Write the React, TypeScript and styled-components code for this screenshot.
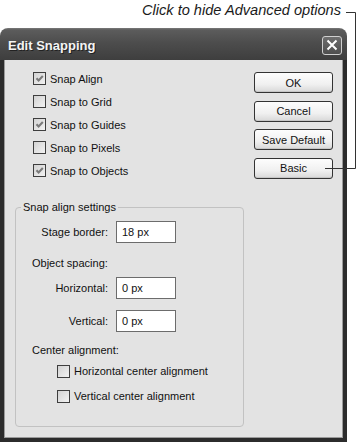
import React from 'react'
import styled, { createGlobalStyle } from 'styled-components'

const GlobalSt = createGlobalStyle`
  html, body {
    margin: 0;
    padding: 0;
    background: #fff;
  }
  body {
    font-family: "Liberation Sans", Arial, sans-serif;
    color: #111;
  }
`

const PageSt = styled.div`
  position: relative;
  width: 359px;
  height: 443px;
  overflow: hidden;
  background: #fff;
`

const CaptionSt = styled.div`
  height: 28px;
  box-sizing: border-box;
  padding: 2px 18px 0 0;
  text-align: right;
  font-style: italic;
  font-size: 14.6px;
  line-height: 16px;
  color: #1a1a1a;
`

// leader line from the caption to the Basic button
const LeaderSt = styled.svg`
  position: absolute;
  left: 0;
  top: 0;
  pointer-events: none;
`

const WindowSt = styled.div`
  width: 347px;
  height: 414px;
  display: flex;
  flex-direction: column;
`

const TitleBarSt = styled.div`
  height: 32px;
  box-sizing: border-box;
  border-radius: 8px 8px 0 0;
  background: linear-gradient(#7a7a7a 0, #5c5c5c 2px, #4d4d4d 45%, #3e3e3e 100%);
  display: flex;
  align-items: center;
  justify-content: space-between;
  padding: 2px 5px 0 8px;
`

const TitleSt = styled.div`
  font-size: 13px;
  font-weight: bold;
  color: #f4f4f4;
  text-shadow: 1px 1px 0 #222;
`

const CloseSt = styled.div`
  width: 20px;
  height: 19px;
  box-sizing: border-box;
  border: 1px solid #d0d0d0;
  border-radius: 3px;
  background: linear-gradient(#6e6e6e, #4e4e4e);
  display: flex;
  align-items: center;
  justify-content: center;
`

const BodySt = styled.div`
  flex: 1;
  display: flex;
  background: #e3e3e3;
  border: 4px solid #2c2c2c;
  border-top: 0;
  box-shadow: inset 1px 0 #9a9a9a, inset -1px 0 #9a9a9a, inset 0 -1px #9a9a9a;
`

const LeftColSt = styled.div`
  padding: 7px 0 0 11px;
  display: flex;
  flex-direction: column;
`

const CheckListSt = styled.div`
  margin-left: 18px;
  display: flex;
  flex-direction: column;
`

const CheckRowSt = styled.label<{ $h?: number }>`
  display: flex;
  align-items: center;
  gap: 4px;
  height: ${({ $h }) => $h ?? 23}px;
  font-size: 11px;
`

const BoxSt = styled.span`
  width: 13px;
  height: 13px;
  box-sizing: border-box;
  border: 1px solid #3e3e3e;
  background: linear-gradient(135deg, #d2d2d2, #f2f2f2);
  display: flex;
  align-items: center;
  justify-content: center;
`

const GroupSt = styled.fieldset`
  margin: 18px 0 0;
  padding: 7px 0 22px 0;
  width: 229px;
  box-sizing: border-box;
  border: 1px solid #c2c2c2;
  border-radius: 4px;
`

const LegendSt = styled.legend`
  margin-left: 5px;
  padding: 0 2px;
  font-size: 11px;
  line-height: 14px;
`

const GroupInnerSt = styled.div`
  padding-left: 16px;
  display: flex;
  flex-direction: column;
`

const FieldRowSt = styled.div<{ $mt?: number }>`
  display: grid;
  grid-template-columns: 76px 60px;
  column-gap: 8px;
  align-items: center;
  margin-top: ${({ $mt }) => $mt ?? 0}px;
`

const FieldLabelSt = styled.span`
  text-align: right;
  font-size: 11px;
`

const InputSt = styled.div`
  height: 22px;
  box-sizing: border-box;
  border: 1px solid #6c6c6c;
  background: #fff;
  padding: 3px 0 0 5px;
  font-size: 11px;
  line-height: 14px;
`

const SubHeadSt = styled.div<{ $mt: number }>`
  margin-top: ${({ $mt }) => $mt}px;
  font-size: 11px;
  line-height: 14px;
`

const SubChecksSt = styled.div<{ $mt: number }>`
  margin-top: ${({ $mt }) => $mt}px;
  padding-left: 25px;
  display: flex;
  flex-direction: column;
  gap: 9px;
`

const RightColSt = styled.div`
  margin-left: 10px;
  padding-top: 12px;
  display: flex;
  flex-direction: column;
  gap: 7.5px;
`

const ButtonSt = styled.div`
  width: 79px;
  height: 21px;
  box-sizing: border-box;
  border: 1px solid #333;
  border-radius: 3px;
  background: linear-gradient(#fdfdfd 0, #f0f0f0 60%, #d8d8d8 100%);
  box-shadow: inset 0 -1px #c6c6c6;
  display: flex;
  align-items: center;
  justify-content: center;
  font-size: 11px;
  color: #111;
`

const Check = ({ checked }: { checked?: boolean }) => (
  <BoxSt>
    {checked && (
      <svg width="11" height="11" viewBox="0 0 11 11">
        <path d="M2.5 5.2 L4.6 7.4 L8.8 3" fill="none" stroke="#7a7a7a" strokeWidth="2.1" />
      </svg>
    )}
  </BoxSt>
)

const snaps = [
  { label: 'Snap Align', checked: true },
  { label: 'Snap to Grid', checked: false },
  { label: 'Snap to Guides', checked: true },
  { label: 'Snap to Pixels', checked: false },
  { label: 'Snap to Objects', checked: true },
]

export default function App() {
  return (
    <PageSt>
      <GlobalSt />
      <CaptionSt>Click to hide Advanced options</CaptionSt>
      <WindowSt>
        <TitleBarSt>
          <TitleSt>Edit Snapping</TitleSt>
          <CloseSt>
            <svg width="12" height="12" viewBox="0 0 12 12">
              <path d="M1.5 1.5 L10.5 10.5 M10.5 1.5 L1.5 10.5" stroke="#fff" strokeWidth="2" />
            </svg>
          </CloseSt>
        </TitleBarSt>
        <BodySt>
          <LeftColSt>
            <CheckListSt>
              {snaps.map(s => (
                <CheckRowSt key={s.label}>
                  <Check checked={s.checked} />
                  {s.label}
                </CheckRowSt>
              ))}
            </CheckListSt>
            <GroupSt>
              <LegendSt>Snap align settings</LegendSt>
              <GroupInnerSt>
                <FieldRowSt>
                  <FieldLabelSt>Stage border:</FieldLabelSt>
                  <InputSt>18 px</InputSt>
                </FieldRowSt>
                <SubHeadSt $mt={13}>Object spacing:</SubHeadSt>
                <FieldRowSt $mt={7}>
                  <FieldLabelSt>Horizontal:</FieldLabelSt>
                  <InputSt>0 px</InputSt>
                </FieldRowSt>
                <FieldRowSt $mt={11}>
                  <FieldLabelSt>Vertical:</FieldLabelSt>
                  <InputSt>0 px</InputSt>
                </FieldRowSt>
                <SubHeadSt $mt={11}>Center alignment:</SubHeadSt>
                <SubChecksSt $mt={6}>
                  <CheckRowSt $h={16}>
                    <Check />
                    Horizontal center alignment
                  </CheckRowSt>
                  <CheckRowSt $h={16}>
                    <Check />
                    Vertical center alignment
                  </CheckRowSt>
                </SubChecksSt>
              </GroupInnerSt>
            </GroupSt>
          </LeftColSt>
          <RightColSt>
            <ButtonSt>OK</ButtonSt>
            <ButtonSt>Cancel</ButtonSt>
            <ButtonSt>Save Default</ButtonSt>
            <ButtonSt>Basic</ButtonSt>
          </RightColSt>
        </BodySt>
      </WindowSt>
      <LeaderSt width="359" height="443">
        <polyline
          points="346,12.5 355.5,12.5 355.5,168.5 325,168.5"
          fill="none"
          stroke="#333"
          strokeWidth="1"
        />
      </LeaderSt>
    </PageSt>
  )
}
